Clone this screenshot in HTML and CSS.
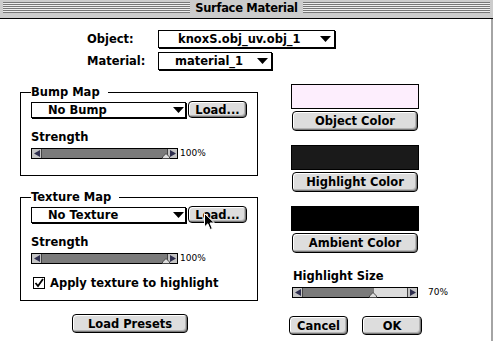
FILE: index.html
```html
<!DOCTYPE html>
<html lang="en">
<head>
    <meta charset="UTF-8">
    <title>Surface Material</title>
    <link rel="stylesheet" href="styles.css">
</head>
<body>
    <div class="window">
        <div class="titlebar">
            <div class="stripes"><span class="title">Surface Material</span></div>
        </div>
        <div class="content">
            <div class="selectors">
                <label>Object:</label>
                <div class="popup popup-object">
                    <span class="popup-text">knoxS.obj_uv.obj_1</span>
                    <svg class="arrow" width="11" height="6" viewBox="0 0 11 6"><polygon points="0,0 11,0 5.5,6" fill="#000"/></svg>
                </div>
                <label>Material:</label>
                <div class="popup popup-material">
                    <span class="popup-text">material_1</span>
                    <svg class="arrow" width="11" height="6" viewBox="0 0 11 6"><polygon points="0,0 11,0 5.5,6" fill="#000"/></svg>
                </div>
            </div>

            <div class="main">
                <div class="left-col">
                    <fieldset class="group">
                        <legend>Bump Map</legend>
                        <div class="load-row">
                            <div class="popup popup-map">
                                <span class="popup-text">No Bump</span>
                                <svg class="arrow" width="11" height="6" viewBox="0 0 11 6"><polygon points="0,0 11,0 5.5,6" fill="#000"/></svg>
                            </div>
                            <button class="btn btn-load">Load...</button>
                        </div>
                        <div class="field-label">Strength</div>
                        <div class="slider-row">
                            <div class="slider slider-strength">
                                <div class="slider-cap cap-left"><svg width="6" height="7" viewBox="0 0 6 7"><polygon points="6,0 6,7 0,3.5" fill="#2e2e4e"/></svg></div>
                                <div class="slider-track" style="--val: 100%">
                                    <svg class="thumb" width="8" height="6" viewBox="0 0 8 6"><polygon points="4,0.5 7.5,4 7.5,5.5 0.5,5.5 0.5,4" fill="#ddd" stroke="#444"/></svg>
                                </div>
                                <div class="slider-cap cap-right"><svg width="6" height="7" viewBox="0 0 6 7"><polygon points="0,0 0,7 6,3.5" fill="#2e2e4e"/></svg></div>
                            </div>
                            <span class="value">100%</span>
                        </div>
                    </fieldset>

                    <fieldset class="group group-texture">
                        <legend>Texture Map</legend>
                        <div class="load-row">
                            <div class="popup popup-map">
                                <span class="popup-text">No Texture</span>
                                <svg class="arrow" width="11" height="6" viewBox="0 0 11 6"><polygon points="0,0 11,0 5.5,6" fill="#000"/></svg>
                            </div>
                            <button class="btn btn-load">Load...</button>
                        </div>
                        <div class="field-label">Strength</div>
                        <div class="slider-row">
                            <div class="slider slider-strength">
                                <div class="slider-cap cap-left"><svg width="6" height="7" viewBox="0 0 6 7"><polygon points="6,0 6,7 0,3.5" fill="#2e2e4e"/></svg></div>
                                <div class="slider-track" style="--val: 100%">
                                    <svg class="thumb" width="8" height="6" viewBox="0 0 8 6"><polygon points="4,0.5 7.5,4 7.5,5.5 0.5,5.5 0.5,4" fill="#ddd" stroke="#444"/></svg>
                                </div>
                                <div class="slider-cap cap-right"><svg width="6" height="7" viewBox="0 0 6 7"><polygon points="0,0 0,7 6,3.5" fill="#2e2e4e"/></svg></div>
                            </div>
                            <span class="value">100%</span>
                        </div>
                        <label class="check-row">
                            <svg class="checkbox" width="12" height="12" viewBox="0 0 12 12">
                                <rect x="0.5" y="0.5" width="11" height="11" fill="#fff" stroke="#000"/>
                                <path d="M2.5 6 L5 9 L10 2" fill="none" stroke="#000" stroke-width="1.8"/>
                            </svg>
                            <span>Apply texture to highlight</span>
                        </label>
                    </fieldset>

                    <div class="bottom-row">
                        <button class="btn btn-presets">Load Presets</button>
                    </div>
                </div>

                <div class="right-col">
                    <div class="swatch swatch-object"></div>
                    <button class="btn btn-color">Object Color</button>
                    <div class="swatch swatch-highlight"></div>
                    <button class="btn btn-color">Highlight Color</button>
                    <div class="swatch swatch-ambient"></div>
                    <button class="btn btn-color">Ambient Color</button>

                    <div class="field-label size-label">Highlight Size</div>
                    <div class="slider-row">
                        <div class="slider slider-size">
                            <div class="slider-cap cap-left"><svg width="6" height="7" viewBox="0 0 6 7"><polygon points="6,0 6,7 0,3.5" fill="#2e2e4e"/></svg></div>
                            <div class="slider-track" style="--val: 68%">
                                <svg class="thumb" width="8" height="6" viewBox="0 0 8 6"><polygon points="4,0.5 7.5,4 7.5,5.5 0.5,5.5 0.5,4" fill="#ddd" stroke="#444"/></svg>
                            </div>
                            <div class="slider-cap cap-right"><svg width="6" height="7" viewBox="0 0 6 7"><polygon points="0,0 0,7 6,3.5" fill="#2e2e4e"/></svg></div>
                        </div>
                        <span class="value value-size">70%</span>
                    </div>

                    <div class="bottom-row dialog-buttons">
                        <button class="btn btn-cancel">Cancel</button>
                        <button class="btn btn-ok">OK</button>
                    </div>
                </div>
            </div>
        </div>

        <!-- mouse pointer -->
        <svg class="cursor" width="12" height="18" viewBox="0 0 12 18">
            <path d="M0.5 0.5 L0.5 14 L3.8 10.8 L6.2 16.5 L8.3 15.6 L6 10 L10.5 10 Z" fill="#000" stroke="#fff" stroke-width="1"/>
        </svg>
    </div>
</body>
</html>
```

FILE: styles.css
```css
body {
    margin: 0;
    background-color: #ffffff;
    font-family: "DejaVu Sans", Verdana, sans-serif;
    font-size: 11.5px;
    font-weight: bold;
    color: #000;
}
.window {
    position: relative;
    width: 493px;
    height: 341px;
    overflow: hidden;
}
.titlebar {
    height: 19px;
    background-color: #cccccc;
    border-bottom: 1px solid #000;
    padding-top: 2px;
    box-sizing: border-box;
}
.stripes {
    margin: 0 3px;
    height: 11px;
    background: repeating-linear-gradient(to bottom, #777 0, #777 1px, #eeeeee 1px, #eeeeee 2px);
    display: flex;
    justify-content: center;
}
.title {
    background-color: #cccccc;
    padding: 0 5px;
    margin-top: -1px;
    height: 15px;
    line-height: 15px;
    letter-spacing: -0.3px;
}
.content {
    height: 322px;
    border-right: 2px solid #a4a4a4;
    box-sizing: border-box;
}

/* object / material */
.selectors {
    display: grid;
    grid-template-columns: 71px auto;
    row-gap: 4px;
    align-items: center;
    justify-items: start;
    padding: 11px 0 0 87px;
}
.popup {
    display: flex;
    align-items: center;
    justify-content: space-between;
    background-color: #fff;
    border: 1px solid #000;
    box-shadow: 1px 1px 0 #000;
    box-sizing: border-box;
}
.popup .arrow {
    margin-right: 3px;
}
.popup-object {
    width: 177px;
    height: 18px;
    padding-left: 19px;
}
.popup-material {
    width: 114px;
    height: 18px;
    padding-left: 16px;
}

.main {
    display: flex;
    gap: 31px;
    padding-left: 20px;
    margin-top: 14px;
}
.left-col {
    width: 238px;
    padding-top: 1px;
}
.group {
    margin: 0;
    padding: 2px 10px 16px;
    border: 1px solid #000;
    min-width: 0;
    box-sizing: border-box;
    width: 238px;
}
.group legend {
    padding: 0 8px 0 0;
    line-height: 14px;
}
.group-texture {
    margin-top: 14px;
    padding-bottom: 10px;
}
.load-row {
    display: flex;
    align-items: flex-start;
    gap: 1px;
}
.popup-map {
    width: 155px;
    height: 16px;
    margin-top: 1px;
    padding-left: 16px;
}
.popup-map .arrow {
    margin-right: 1px;
}

.btn {
    font: inherit;
    color: #000;
    background-color: #dddddd;
    border: 1px solid #000;
    border-radius: 4px;
    box-shadow: inset 1px 1px 0 #fff, inset -1px -1px 0 #7a7a7a, inset -2px -2px 0 #b5b5b5;
    padding: 0;
    box-sizing: border-box;
    cursor: pointer;
}
.btn-load {
    width: 59px;
    height: 17px;
    line-height: 14px;
    margin-left: 1px;
}
.field-label {
    line-height: 14px;
    margin-top: 12px;
}
.slider-row {
    display: flex;
    align-items: center;
    margin-top: 4px;
}
.slider {
    display: flex;
    flex-shrink: 0;
    height: 11px;
    border: 1px solid #000;
    box-sizing: border-box;
}
.slider-strength {
    width: 147px;
}
.slider-size {
    width: 126px;
    margin-left: 3px;
}
.slider-cap {
    width: 9px;
    background-color: #c4c4c4;
    display: flex;
    align-items: center;
    justify-content: center;
}
.cap-left {
    border-right: 1px solid #444;
}
.cap-right {
    border-left: 1px solid #444;
}
.slider-track {
    flex: 1;
    position: relative;
    background: linear-gradient(to right, #7b7b7b var(--val), #dcdcdc var(--val));
}
.thumb {
    position: absolute;
    bottom: -1px;
    left: var(--val);
    transform: translateX(-5px);
}
.value {
    font-size: 9px;
    font-weight: normal;
    line-height: 11px;
    margin-left: 2px;
    white-space: nowrap;
}
.value-size {
    margin-left: 10px;
}
.check-row {
    display: flex;
    align-items: center;
    gap: 5px;
    margin-top: 12px;
    padding-left: 2px;
    line-height: 14px;
}

.bottom-row {
    margin-top: 13px;
}
.btn-presets {
    margin-left: 52px;
    width: 116px;
    height: 19px;
}

.right-col {
    width: 133px;
}
.swatch {
    width: 128px;
    height: 25px;
    margin-left: 2px;
    border: 1px solid #000;
    box-sizing: border-box;
}
.swatch-object {
    background-color: #fdeefd;
}
.swatch-highlight {
    background-color: #1a1a1a;
    margin-top: 14px;
}
.swatch-ambient {
    background-color: #000;
    margin-top: 14px;
}
.btn-color {
    display: block;
    width: 126px;
    height: 20px;
    margin: 2px 0 0 3px;
}
.size-label {
    margin: 16px 0 0 4px;
}
.dialog-buttons {
    display: flex;
    gap: 14px;
    margin-top: 18px;
}
.btn-cancel {
    width: 59px;
    height: 19px;
}
.btn-ok {
    width: 60px;
    height: 19px;
}

.cursor {
    position: absolute;
    left: 204px;
    top: 213px;
}
```
